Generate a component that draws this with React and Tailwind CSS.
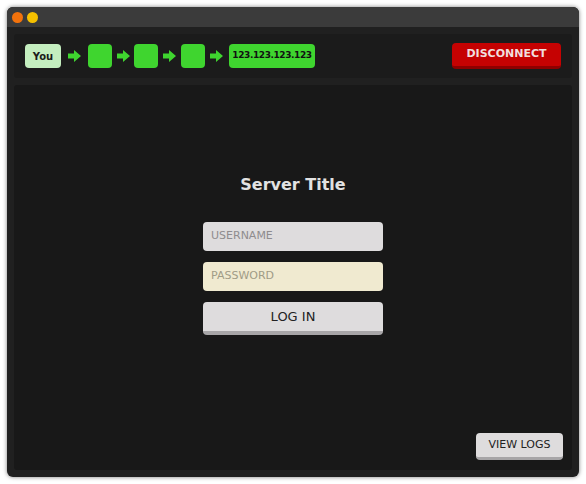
import React from "react";

const Arrow = () => (
  <svg width="13" height="12" viewBox="0 0 13 12" className="shrink-0">
    <path d="M0 3.5 H6 V0 L13 6 L6 12 V8.5 H0 Z" fill="#3fd52f" />
  </svg>
);

export default function App() {
  return (
    <div className="w-[586px] h-[484px] bg-white p-[7px] pb-[7px]" style={{ fontFamily: '"DejaVu Sans", "Liberation Sans", sans-serif' }}>
      <div className="w-[572px] h-[470px] rounded-[6px] overflow-hidden bg-[#202020] flex flex-col shadow-[0_0_4px_rgba(0,0,0,0.5)]">
        <div className="h-[20px] bg-[#3b3b3b] flex items-center gap-[4px] px-[5px]">
          <div className="w-[11px] h-[11px] rounded-full bg-[#f2720c]" />
          <div className="w-[11px] h-[11px] rounded-full bg-[#f5c000]" />
        </div>
        <div className="flex-1 flex flex-col gap-[7px] p-[7px]">
          <div className="h-[44px] bg-[#1b1b1b] rounded-[3px] flex items-center px-[11px]">
            <div className="h-[24px] w-[36px] rounded-[4px] bg-[#c4eebf] flex items-center justify-center text-[10px] font-bold text-[#1a1a1a]">You</div>
            <div className="mx-[7px] flex"><Arrow /></div>
            <div className="h-[24px] w-[24px] rounded-[4px] bg-[#3fd52f]" />
            <div className="ml-[5px] mr-[4px] flex"><Arrow /></div>
            <div className="h-[24px] w-[24px] rounded-[4px] bg-[#3fd52f]" />
            <div className="ml-[5px] mr-[5px] flex"><Arrow /></div>
            <div className="h-[24px] w-[24px] rounded-[4px] bg-[#3fd52f]" />
            <div className="ml-[5px] mr-[6px] flex"><Arrow /></div>
            <div className="h-[24px] w-[86px] rounded-[4px] bg-[#3fd52f] flex items-center justify-center text-[9px] font-bold text-[#111] tracking-[-0.4px]">123.123.123.123</div>
            <div className="flex-1" />
            <div className="h-[26px] w-[109px] rounded-[4px] bg-[#c50202] border-b-[3px] border-[#8e0000] flex items-center justify-center text-[11px] font-bold text-[#f1dede]">DISCONNECT</div>
          </div>
          <div className="flex-1 bg-[#181818] rounded-[3px] flex flex-col items-center relative">
            <div className="mt-[89px] text-[16px] font-bold text-[#e2e2e2] leading-[22px]">Server Title</div>
            <div className="mt-[26px] w-[180px] h-[29px] rounded-[4px] bg-[#dedcdd] flex items-center px-[8px] text-[11px] text-[#8e8c8e]">USERNAME</div>
            <div className="mt-[11px] w-[180px] h-[29px] rounded-[4px] bg-[#f0ead0] flex items-center px-[8px] text-[11px] text-[#a09c86]">PASSWORD</div>
            <div className="mt-[11px] w-[180px] h-[33px] rounded-[4px] bg-[#dedcdd] border-b-[4px] border-[#a7a5a7] flex items-center justify-center text-[13px] text-[#222]">LOG IN</div>
            <div className="absolute right-[9px] bottom-[10px] w-[87px] h-[27px] rounded-[4px] bg-[#dedcdd] border-b-[3px] border-[#a7a5a7] flex items-center justify-center text-[11px] text-[#222]">VIEW LOGS</div>
          </div>
        </div>
      </div>
    </div>
  );
}
